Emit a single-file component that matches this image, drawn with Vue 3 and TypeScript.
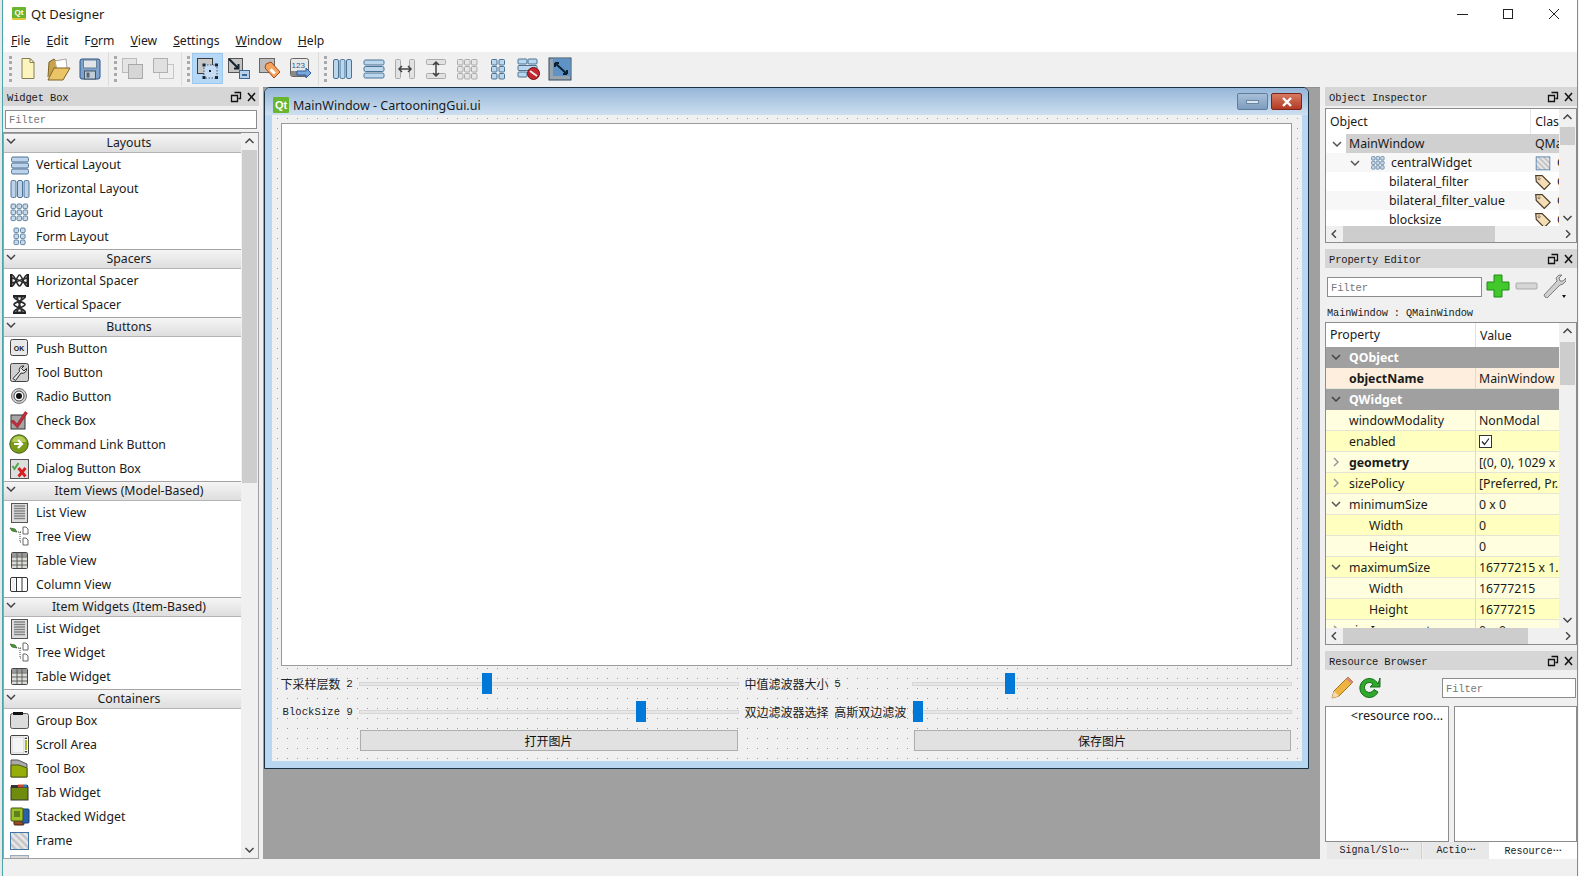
<script setup lang="ts">
const bar3h = (c: string, s: string) => [3, 9, 15].map(y => `<rect x="2.5" y="${y}" width="17" height="5" rx="1.5" fill="${c}" stroke="${s}"/>`).join('')
const bar3v = (c: string, s: string) => [2, 8.5, 15].map(x => `<rect x="${x}" y="2.5" width="5" height="17" rx="1.5" fill="${c}" stroke="${s}"/>`).join('')
const cells = (xs: number[], ys: number[], z: number, c: string, s: string) => xs.flatMap(x => ys.map(y => `<rect x="${x}" y="${y}" width="${z}" height="${z}" rx="1.2" fill="${c}" stroke="${s}" stroke-width=".9"/>`)).join('')
const listLines = [4, 6.5, 9, 11.5, 14, 16.5].map(y => `<path d="M5 ${y}h11" stroke="#808080" stroke-width="1.4"/>`).join('')
const treeIc = '<path d="M1 2l5 1 2 3-5-1z" fill="#4d9a3a" stroke="#2d5a20" stroke-width=".7"/><path d="M9 6h4M11 6v10h2" stroke="#444" stroke-dasharray="1 1" fill="none"/><path d="M14 1h3l2 2v5h-5zM14 12h3l2 2v5h-5z" fill="#fff" stroke="#555" stroke-width=".9"/>'
const tableIc = '<rect x="2.5" y="2.5" width="16" height="16" rx="1" fill="#dcdcd8" stroke="#444"/><rect x="3" y="3" width="15" height="3.5" fill="#999"/><path d="M3 7h15M3 11h15M3 15h15M8 3v15M13 3v15" stroke="#555" stroke-width=".9"/>'
const tag = '<path d="M.7 1.500h6l7.500 7.500-5.500 5.500-7.500-7.500z" fill="#f4dcb4" stroke="#4a3a28" stroke-width="1.100"/><circle cx="3.800" cy="4.500" r="1" fill="#fff" stroke="#4a3a28" stroke-width=".6"/>'
const dock = '<path d="M4.500 1.500h6v6h-2M1.500 4.500h6v6h-6z" fill="none" stroke="#111" stroke-width="1.300"/><path d="M18 2l7 8M25 2l-7 8" stroke="#111" stroke-width="1.500"/>'

const icons: Record<string, string> = {
  vl: bar3h('#bcd3ea', '#4f7596'),
  hl: bar3v('#bcd3ea', '#4f7596'),
  grid: cells([2, 8, 14], [2, 8, 14], 4.6, '#c8d9ea', '#4f7596'),
  form: cells([5, 11.5], [2, 8, 14], 4.6, '#c8d9ea', '#4f7596'),
  hsp: '<path d="M1 4h2.500v13H1zM17.500 4H20v13h-2.500z" fill="#222"/><path d="M3 5c3 0 5 11 7.500 11s4.500-11 7.500-11M3 16c3 0 5-11 7.500-11s4.500 11 7.500 11M3 8l15 5M3 13l15-5" fill="none" stroke="#2c2c2c" stroke-width="1.700"/>',
  vsp: '<path d="M4 1h13v2.500H4zM4 17.500h13V20H4z" fill="#222"/><path d="M5 3c0 3 11 5 11 7.500s-11 4.500-11 7.500M16 3c0 3-11 5-11 7.500s11 4.500 11 7.500M8 3l5 15M13 3l-5 15" fill="none" stroke="#2c2c2c" stroke-width="1.700"/>',
  push: '<rect x="1.5" y="1.500" width="17" height="16" rx="2" fill="#e9e9e9" stroke="#444"/><text x="10" y="12.500" font-size="7" font-weight="700" font-family="Liberation Sans" text-anchor="middle" fill="#222">OK</text>',
  tool: '<rect x="1.5" y="1.500" width="18" height="18" rx="2" fill="#cfcfcf" stroke="#444"/><path d="M4 16.500l6.500-7a4 4 0 0 1 4.500-5.500l-2.500 2.500 2.500 2.500 2.500-2.500a4 4 0 0 1-5.500 4.500l-5.500 7.500z" fill="#e8e8e8" stroke="#2c2c2c"/>',
  radio: '<circle cx="10" cy="10" r="7.500" fill="#d0d0d0" stroke="#777"/><circle cx="10" cy="10" r="5" fill="#fff" stroke="#444"/><circle cx="10" cy="10" r="3" fill="#111"/>',
  check: '<rect x="2" y="5" width="14" height="14" fill="#a6a6a6" stroke="#333"/><path d="M4.500 10l3.500 4 8-12.500 2.500 1.500-10 15-6.500-6.500z" fill="#c62b3a" stroke="#7a1420" stroke-width=".5"/>',
  cmd: '<circle cx="10" cy="10" r="9.200" fill="#7a9a1a" stroke="#47600f"/><path d="M3 8a7 6 0 0 1 14 0z" fill="#b5cc5a"/><path d="M5 10h7M9 6l4 4-4 4" fill="none" stroke="#fff" stroke-width="2.200"/>',
  dlg: '<rect x="1.500" y="1.500" width="18" height="19" fill="#dedede" stroke="#555"/><path d="M3.500 8l2 3 4-6" fill="none" stroke="#4da84a" stroke-width="2"/><path d="M9.500 10l7 8.500M16.500 10l-7 8.500" stroke="#d6201f" stroke-width="2.800"/>',
  list: `<rect x="2.500" y="1.500" width="16" height="19" fill="#dcdcdc" stroke="#555"/>${listLines}`,
  tree: treeIc,
  table: tableIc,
  column: '<rect x="1.500" y="3.500" width="17" height="14" rx="1.500" fill="#fff" stroke="#333"/><path d="M7.500 4v13M13 4v13" stroke="#333"/><rect x="3" y="5" width="3" height="11" fill="#eee"/>',
  group: '<rect x="1.500" y="3.500" width="18" height="15" rx="2" fill="#dcdcdc" stroke="#555"/><rect x="4" y="2" width="10" height="3" fill="#111"/>',
  scroll: '<rect x="1.500" y="1.500" width="18" height="19" rx="1.500" fill="#fff" stroke="#444"/><rect x="3" y="3" width="12" height="16" fill="#f4f4f4" stroke="#aaa" stroke-width=".5"/><rect x="16" y="6" width="2" height="10" fill="#a8b820"/><path d="M17 3l1.500 2h-3zM17 19l1.500-2h-3z" fill="#333"/>',
  toolbox: '<path d="M2 2h7l9 4v13H2z" fill="#aaa" stroke="#555"/><path d="M2 7h8l8 3v9H2z" fill="#96ad0a" stroke="#4c5a10"/>',
  tab: '<rect x="2" y="5" width="17" height="13" fill="#6f8c0f" stroke="#333"/><rect x="2" y="3" width="17" height="3" fill="#333"/><rect x="9" y="2.500" width="5" height="3" fill="#c94a2a"/><rect x="14" y="2.500" width="4" height="3" fill="#3a78b0"/>',
  stacked: '<rect x="5" y="6" width="10" height="13" rx="1" fill="#9a4a20" stroke="#4a2010"/><rect x="13" y="3" width="7" height="14" rx="1" fill="#2a62a8" stroke="#123a70"/><rect x="2" y="2" width="12" height="13" rx="1" fill="#9cc028" stroke="#3e5410"/><path d="M5 6h6M5 8h6M5 10h6" stroke="#244010"/>',
  frame: '<defs><pattern id="st" width="5" height="5" patternUnits="userSpaceOnUse" patternTransform="rotate(-45)"><rect width="5" height="5" fill="#e8e8e8"/><rect width="2.500" height="5" fill="#c4c4c4"/></pattern></defs><rect x="1.500" y="2.500" width="18" height="17" fill="url(#st)" stroke="#3f74a8"/>',
  frame2: '<rect x="1.500" y="1.500" width="18" height="19" fill="#d8d8d8" stroke="#9ab"/>',
  tag: `<svg viewBox="0 0 15 15" x="0" y="0" width="21" height="21">${tag}</svg>`,
  tnew: '<path d="M7 2.500h8l4 4v16H7z" fill="#fdf4bd" stroke="#857f57"/><path d="M15 2.500l4 4h-4z" fill="#fffde8" stroke="#857f57"/>',
  topen: '<path d="M2 21l1-15 5-3 2 2 10-1-1 6" fill="#c9a24a" stroke="#7d6324"/><path d="M9 5l11-2 1 9-10 2z" fill="#fff" stroke="#aaa"/><path d="M2 24l6-12h16l-7 12z" fill="#ecc468" stroke="#7d6324"/>',
  tsave: '<rect x="3" y="3" width="20" height="20" rx="2" fill="#7fa2cf" stroke="#2b5688"/><rect x="6.500" y="4" width="13" height="8" fill="#e2e5e8" stroke="#6a7f98"/><rect x="7.500" y="15" width="11" height="8" fill="#c0cbd8" stroke="#456"/><rect x="9.500" y="16.500" width="3" height="5" fill="#567"/>',
  tback: '<rect x="2.500" y="2.500" width="14" height="14" fill="#e4e4e4" stroke="#bcbcbc"/><rect x="8.500" y="8.500" width="14" height="14" fill="#d6d6d6" stroke="#a8a8a8"/>',
  tfront: '<rect x="8.500" y="8.500" width="14" height="14" fill="#efefef" stroke="#c6c6c6"/><rect x="2.500" y="2.500" width="14" height="14" fill="#e0e0e0" stroke="#b0b0b0"/>',
  tedit: '<rect x="2.500" y="2.500" width="15" height="15" fill="#c8c8c8" stroke="#3a3a3a"/><rect x="9" y="9" width="13" height="13" fill="#c5dcf5" stroke="#556" stroke-dasharray="1.500 1.500"/><g fill="#14283c"><rect x="7.500" y="7.500" width="3" height="3"/><rect x="20" y="7.500" width="3" height="3"/><rect x="7.500" y="20" width="3" height="3"/><rect x="20" y="20" width="3" height="3"/><rect x="14" y="14" width="2" height="2"/></g>',
  tsig: '<rect x="2.500" y="2.500" width="14" height="14" fill="#c4c4c4" stroke="#555"/><path d="M3 3l9 9M8 12.500h4.500V8" fill="none" stroke="#16202c" stroke-width="2"/><rect x="13.500" y="14.500" width="10" height="8" fill="#b8d0ea" stroke="#3c6898"/><path d="M16 19h5" stroke="#3c6898" stroke-width="2"/>',
  tbud: '<rect x="2.500" y="2.500" width="15" height="14" fill="#bdbdbd" stroke="#666"/><path d="M9 8l5-2 9 10-6 6-9-10z" fill="#f4a45c" stroke="#a8451a"/><rect x="13" y="14" width="6" height="3" transform="rotate(45 16 15)" fill="#fff"/>',
  ttab: '<rect x="2.500" y="2.500" width="18" height="18" rx="2" fill="#e8e8e8" stroke="#666"/><rect x="3" y="15" width="17" height="5" fill="#888"/><text x="3.500" y="12" font-size="8" font-family="Liberation Sans" fill="#2a5a9a">123</text><path d="M9 15h9v-3l5 5-5 5v-3H9z" fill="#7aa8dc" stroke="#2a5a9a"/>',
  thl: [3.500, 10, 16.500].map(x => `<rect x="${x}" y="3.500" width="5" height="19" rx="1.500" fill="#bcd6ee" stroke="#4b7394"/>`).join(''),
  tvl: [4, 10.500, 17].map(y => `<rect x="3" y="${y}" width="20" height="5" rx="1.500" fill="#bcd6ee" stroke="#4b7394"/>`).join(''),
  tsh: '<rect x="3.500" y="3.500" width="5" height="19" rx="1" fill="#e2e2e2" stroke="#aaa"/><rect x="17.500" y="3.500" width="5" height="19" rx="1" fill="#e2e2e2" stroke="#aaa"/><path d="M7 13h12M10 10l-3 3 3 3M16 10l3 3-3 3" fill="none" stroke="#444" stroke-width="1.500"/>',
  tsv: '<rect x="3.500" y="3.500" width="19" height="5" rx="1" fill="#e2e2e2" stroke="#aaa"/><rect x="3.500" y="17.500" width="19" height="5" rx="1" fill="#e2e2e2" stroke="#aaa"/><path d="M13 6v14M10 9l3-3 3 3M10 17l3 3 3-3" fill="none" stroke="#444" stroke-width="1.500"/>',
  tgr: [3.500, 10.500, 17.500].flatMap(x => [3.500, 10.500, 17.500].map(y => `<rect x="${x}" y="${y}" width="5.500" height="5.500" rx="1" fill="#e6e6e6" stroke="#aaa"/>`)).join(''),
  tfm: [6.500, 14].flatMap(x => [3.500, 10.500, 17.500].map(y => `<rect x="${x}" y="${y}" width="5.500" height="5.500" rx="1" fill="#bcd6ee" stroke="#4b7394"/>`)).join(''),
  tbrk: '<rect x="2" y="3" width="9" height="5" rx="1" fill="#bcd6ee" stroke="#4b7394"/><rect x="12" y="3" width="9" height="5" rx="1" fill="#bcd6ee" stroke="#4b7394"/><rect x="2" y="9.500" width="19" height="5" rx="1" fill="#bcd6ee" stroke="#4b7394"/><rect x="2" y="16" width="9" height="5" rx="1" fill="#bcd6ee" stroke="#4b7394"/><circle cx="17.500" cy="17.500" r="6" fill="#c6262e" stroke="#701018"/><path d="M14 15l7 5" stroke="#eee" stroke-width="2"/>',
  tadj: '<rect x="2" y="2" width="22" height="22" fill="#98a4ae" stroke="#2f4a62"/><rect x="6" y="2.500" width="17.500" height="17.500" fill="#5f93c6"/><path d="M8 7l12 11M8 7h4M8 7v4M20 18h-4M20 18v-4" fill="none" stroke="#0c2036" stroke-width="2"/>',
  plus: '<path d="M8 1h8v7h7v8h-7v7H8v-7H1V8h7z" fill="#43c82c" stroke="#1f8c18"/>',
  minus: '<rect x="2" y="9" width="21" height="6" rx="1" fill="#d6d6d6" stroke="#aaa"/>',
  wrench: '<path d="M3 23l-1-2 13-14-1-3 3-3 3 0-3 3 1 3 3 0 3-3v3l-3 3-3 1L5 24z" fill="#cfcfcf" stroke="#666" stroke-width=".8"/><path d="M20 21l4 0-2 3z" fill="#111"/>',
  pencil: '<path d="M2 23l2-7L18 2l5 5L9 21z" fill="#edb440" stroke="#a8751c"/><path d="M18 2l5 5-2 2-5-5z" fill="#d88a7a"/><path d="M2 23l2-7 5 5z" fill="#f4dcb0"/>',
  refresh: '<path d="M21 9A9.500 9.500 0 1 0 21 17l-4-2.500A5 5 0 1 1 16 9l-3 3h10V3z" fill="#2fa82c" stroke="#176c18"/>',
}

const tbGroups = [
  ['tnew', 'topen', 'tsave'],
  ['tback', 'tfront'],
  ['tedit', 'tsig', 'tbud', 'ttab'],
  ['thl', 'tvl', 'tsh', 'tsv', 'tgr', 'tfm', 'tbrk', 'tadj'],
]

const boxes = [
  { t: 'Layouts', r: [['Vertical Layout', 'vl'], ['Horizontal Layout', 'hl'], ['Grid Layout', 'grid'], ['Form Layout', 'form']] },
  { t: 'Spacers', r: [['Horizontal Spacer', 'hsp'], ['Vertical Spacer', 'vsp']] },
  { t: 'Buttons', r: [['Push Button', 'push'], ['Tool Button', 'tool'], ['Radio Button', 'radio'], ['Check Box', 'check'], ['Command Link Button', 'cmd'], ['Dialog Button Box', 'dlg']] },
  { t: 'Item Views (Model-Based)', r: [['List View', 'list'], ['Tree View', 'tree'], ['Table View', 'table'], ['Column View', 'column']] },
  { t: 'Item Widgets (Item-Based)', r: [['List Widget', 'list'], ['Tree Widget', 'tree'], ['Table Widget', 'table']] },
  { t: 'Containers', r: [['Group Box', 'group'], ['Scroll Area', 'scroll'], ['Tool Box', 'toolbox'], ['Tab Widget', 'tab'], ['Stacked Widget', 'stacked'], ['Frame', 'frame'], ['', 'frame2']] },
]

const sliders = [123, 93, 277, 1]

const objs = [
  { n: 'MainWindow', c: 'QMainWindow', gut: 20, chev: true, sel: true },
  { n: 'centralWidget', c: 'QWidget', gut: 38, chev: true, ic: 'grid', ci: 'frame', alt: true },
  { n: 'bilateral_filter', c: 'QLabel', gut: 63, ci: 'tag' },
  { n: 'bilateral_filter_value', c: 'QLabel', gut: 63, ci: 'tag', alt: true },
  { n: 'blocksize', c: 'QLabel', gut: 63, ci: 'tag' },
]

type P = { n: string; v?: string; g?: boolean; b?: boolean; a?: string; l?: number; cls?: string; chk?: boolean }
const props: P[] = [
  { n: 'QObject', g: true, a: 'd' },
  { n: 'objectName', v: 'MainWindow', b: true, cls: 'peach' },
  { n: 'QWidget', g: true, a: 'd' },
  { n: 'windowModality', v: 'NonModal', cls: 'y1' },
  { n: 'enabled', chk: true, cls: 'y2' },
  { n: 'geometry', v: '[(0, 0), 1029 x 678]', b: true, a: 'r', cls: 'y1' },
  { n: 'sizePolicy', v: '[Preferred, Pr...', a: 'r', cls: 'y2' },
  { n: 'minimumSize', v: '0 x 0', a: 'd', cls: 'y1' },
  { n: 'Width', v: '0', l: 1, cls: 'y2' },
  { n: 'Height', v: '0', l: 1, cls: 'y1' },
  { n: 'maximumSize', v: '16777215 x 1...', a: 'd', cls: 'y2' },
  { n: 'Width', v: '16777215', l: 1, cls: 'y1' },
  { n: 'Height', v: '16777215', l: 1, cls: 'y2' },
  { n: 'sizeIncrement', v: '0 x 0', a: 'r', cls: 'y1' },
]
</script>

<template>
  <div class="app">
    <div class="win">
      <header class="titlebar">
        <span class="qt small">Qt</span>
        <span class="apptitle">Qt Designer</span>
        <div class="wctl">
          <svg viewBox="0 0 46 20"><path d="M18 10.500h11" stroke="#222" /></svg>
          <svg viewBox="0 0 46 20"><rect x="18.500" y="5.500" width="9" height="9" fill="none" stroke="#222" /></svg>
          <svg viewBox="0 0 46 20"><path d="M18 5l10 10M28 5L18 15" stroke="#222" /></svg>
        </div>
      </header>
      <nav class="menubar">
        <span><u>F</u>ile</span><span><u>E</u>dit</span><span>F<u>o</u>rm</span><span><u>V</u>iew</span><span><u>S</u>ettings</span><span><u>W</u>indow</span><span><u>H</u>elp</span>
      </nav>
      <div class="toolbar">
        <div v-for="(g, gi) in tbGroups" :key="gi" class="tbgroup">
          <i class="handle"></i>
          <button v-for="ic in g" :key="ic" class="tbtn" :class="{ on: ic === 'tedit' }">
            <svg viewBox="0 0 26 26" class="tbic" v-html="icons[ic]"></svg>
          </button>
        </div>
      </div>

      <main class="workspace">
        <aside class="leftdock">
          <div class="docktitle">
            <span>Widget Box</span>
            <svg class="dockbtns" viewBox="0 0 28 12" v-html="dock"></svg>
          </div>
          <div class="filter lf">Filter</div>
          <div class="toolbox">
            <div class="tbcol">
              <template v-for="b in boxes" :key="b.t">
                <div class="cat">
                  <svg class="chev catchev" viewBox="0 0 10 6"><path d="M1 1l4 4 4-4" fill="none" stroke="#444" stroke-width="1.500" /></svg>
                  {{ b.t }}
                </div>
                <div v-for="r in b.r" :key="r[0] + r[1]" class="wrow">
                  <svg class="wic" viewBox="0 0 21 21" v-html="icons[r[1]]"></svg>
                  <span>{{ r[0] }}</span>
                </div>
              </template>
            </div>
            <div class="vbar lbar">
              <svg class="arr" viewBox="0 0 17 17"><path d="M4.500 10l4-4 4 4" fill="none" stroke="#444" stroke-width="1.500" /></svg>
              <div class="track"><div class="thumb"></div></div>
              <svg class="arr" viewBox="0 0 17 17"><path d="M4.500 7l4 4 4-4" fill="none" stroke="#444" stroke-width="1.500" /></svg>
            </div>
          </div>
        </aside>

        <section class="mdi">
          <div class="subwin">
            <div class="subtitle">
              <span class="qt big">Qt</span>
              <span class="subtext">MainWindow - CartooningGui.ui</span>
              <div class="subbtns">
                <button class="sb min"><i></i></button>
                <button class="sb close">
                  <svg viewBox="0 0 14 10"><path d="M3 1l8 8M11 1L3 9" stroke="#fff" stroke-width="2.400" /></svg>
                </button>
              </div>
            </div>
            <div class="form">
              <div class="textarea"></div>
              <div class="flabel">下采样层数 <span>2</span></div>
              <div class="slider"><i class="groove"></i><b class="knob" :style="{ left: sliders[0] + 'px' }"></b></div>
              <div class="flabel pl">中值滤波器大小 <span>5</span></div>
              <div class="slider"><i class="groove"></i><b class="knob" :style="{ left: sliders[1] + 'px' }"></b></div>
              <div class="flabel mono">BlockSize 9</div>
              <div class="slider"><i class="groove"></i><b class="knob" :style="{ left: sliders[2] + 'px' }"></b></div>
              <div class="flabel pl">双边滤波器选择 <em class="cjk">高斯双边滤波</em></div>
              <div class="slider"><i class="groove"></i><b class="knob" :style="{ left: sliders[3] + 'px' }"></b></div>
              <div></div>
              <button class="fbtn b1">打开图片</button>
              <div></div>
              <button class="fbtn b2">保存图片</button>
            </div>
          </div>
        </section>

        <aside class="rightdock">
          <div class="docktitle rd">
            <span>Object Inspector</span>
            <svg class="dockbtns" viewBox="0 0 28 12" v-html="dock"></svg>
          </div>
          <div class="tree">
            <div class="treeup">
              <div class="treeview">
                <div class="thead"><span class="th1">Object</span><span class="th2">Clas</span></div>
                <div v-for="o in objs" :key="o.n" class="orow" :class="{ sel: o.sel, alt: o.alt }">
                  <div class="gut" :style="{ width: o.gut + 'px' }">
                    <svg v-if="o.chev" class="chev ochev" viewBox="0 0 10 6"><path d="M1 1l4 4 4-4" fill="none" stroke="#555" stroke-width="1.500" /></svg>
                  </div>
                  <svg v-if="o.ic" class="oic" viewBox="0 0 21 21" v-html="icons[o.ic]"></svg>
                  <span class="oname">{{ o.n }}</span>
                  <div class="ocls">
                    <svg v-if="o.ci" class="oic2" viewBox="0 0 21 21" v-html="icons[o.ci]"></svg>
                    <span>{{ o.c }}</span>
                  </div>
                </div>
              </div>
              <div class="vbar obar">
                <svg class="arr" viewBox="0 0 17 17"><path d="M4.500 10l4-4 4 4" fill="none" stroke="#444" stroke-width="1.500" /></svg>
                <div class="track"><div class="thumb"></div></div>
                <svg class="arr" viewBox="0 0 17 17"><path d="M4.500 7l4 4 4-4" fill="none" stroke="#444" stroke-width="1.500" /></svg>
              </div>
            </div>
            <div class="hbar ohbar">
              <svg class="arr" viewBox="0 0 17 17"><path d="M10 4.500l-4 4 4 4" fill="none" stroke="#444" stroke-width="1.500" /></svg>
              <div class="track"><div class="thumb"></div></div>
              <svg class="arr" viewBox="0 0 17 17"><path d="M7 4.500l4 4-4 4" fill="none" stroke="#444" stroke-width="1.500" /></svg>
            </div>
          </div>

          <div class="docktitle rd pe">
            <span>Property Editor</span>
            <svg class="dockbtns" viewBox="0 0 28 12" v-html="dock"></svg>
          </div>
          <div class="petools">
            <div class="filter pf">Filter</div>
            <svg class="pic" viewBox="0 0 24 24" v-html="icons.plus"></svg>
            <svg class="pic" viewBox="0 0 24 24" v-html="icons.minus"></svg>
            <svg class="pic" viewBox="0 0 24 24" v-html="icons.wrench"></svg>
          </div>
          <div class="pelabel">MainWindow : QMainWindow</div>
          <div class="ptable">
            <div class="treeup">
              <div class="pview">
                <div class="phead"><span class="pc1">Property</span><span class="pc2">Value</span></div>
                <div v-for="(p, i) in props" :key="i" class="prow" :class="[p.cls, { grp: p.g, bold: p.b }]">
                  <div class="pn" :class="{ lvl: p.l }">
                    <svg v-if="p.a === 'd'" class="chev pchev" viewBox="0 0 10 6"><path d="M1 1l4 4 4-4" fill="none" :stroke="p.g ? '#444' : '#555'" stroke-width="1.500" /></svg>
                    <svg v-if="p.a === 'r'" class="chevr pchev" viewBox="0 0 6 10"><path d="M1 1l4 4-4 4" fill="none" stroke="#999" stroke-width="1.500" /></svg>
                    {{ p.n }}
                  </div>
                  <div class="pv">
                    <svg v-if="p.chk" class="cbx" viewBox="0 0 13 13"><rect x=".5" y=".5" width="12" height="12" fill="#fff" stroke="#333" /><path d="M3 6.500l2.500 3L10 3.500" fill="none" stroke="#222" stroke-width="1.200" /></svg>
                    <span>{{ p.v }}</span>
                  </div>
                </div>
              </div>
              <div class="vbar pbar">
                <svg class="arr" viewBox="0 0 17 17"><path d="M4.500 10l4-4 4 4" fill="none" stroke="#444" stroke-width="1.500" /></svg>
                <div class="track"><div class="thumb"></div></div>
                <svg class="arr" viewBox="0 0 17 17"><path d="M4.500 7l4 4 4-4" fill="none" stroke="#444" stroke-width="1.500" /></svg>
              </div>
            </div>
            <div class="hbar phbar">
              <svg class="arr" viewBox="0 0 17 17"><path d="M10 4.500l-4 4 4 4" fill="none" stroke="#444" stroke-width="1.500" /></svg>
              <div class="track"><div class="thumb"></div></div>
              <svg class="arr" viewBox="0 0 17 17"><path d="M7 4.500l4 4-4 4" fill="none" stroke="#444" stroke-width="1.500" /></svg>
            </div>
          </div>

          <div class="docktitle rd rb">
            <span>Resource Browser</span>
            <svg class="dockbtns" viewBox="0 0 28 12" v-html="dock"></svg>
          </div>
          <div class="rbtools">
            <svg class="pic" viewBox="0 0 24 24" v-html="icons.pencil"></svg>
            <svg class="pic" viewBox="0 0 24 24" v-html="icons.refresh"></svg>
            <div class="filter rf">Filter</div>
          </div>
          <div class="panes">
            <div class="pane p1">&lt;resource roo...</div>
            <div class="pane p2"></div>
          </div>
          <div class="tabs">
            <div class="tabx t1"><span>Signal/Slo<small>•••</small></span></div>
            <div class="tabx t2"><span>Actio<small>•••</small></span></div>
            <div class="tabx t3"><span>Resource<small>•••</small></span></div>
          </div>
        </aside>
      </main>
      <footer class="status"></footer>
    </div>
  </div>
</template>

<style>
html, body { margin: 0; padding: 0; overflow: hidden; background: #f0f0f0; }
</style>

<style scoped>
.app {
  width: 1579px; height: 876px; box-sizing: border-box;
  border-left: 2px solid #e8e8e8; border-right: 1px solid #f4f4f4;
  font-family: "Noto Sans", "Noto Sans CJK SC", sans-serif; font-size: 12.3px; color: #1a1a1a;
  overflow: hidden;
}
.win {
  height: 100%; display: flex; flex-direction: column; background: #f0f0f0;
  border-left: 1px solid #4aa5aa; border-right: 1px solid #4aa5aa;
}
.titlebar { height: 27px; flex: none; background: #fff; display: flex; align-items: center; padding-left: 9px; }
.qt {
  display: flex; align-items: center; justify-content: center; background: #68b52e; color: #fff;
  font-family: "Liberation Sans", sans-serif; font-weight: 700; border-radius: 1px;
}
.qt.small { width: 14px; height: 13px; font-size: 8px; border-bottom: 2px solid #e3c53a; box-sizing: border-box; }
.qt.big { width: 16px; height: 16px; font-size: 11px; margin-top: 7px; }
.apptitle { margin-left: 5px; font-size: 13px; }
.wctl { margin-left: auto; display: flex; }
.wctl svg { width: 46px; height: 20px; }
.menubar { height: 25px; box-sizing: border-box; padding: 2px 0 0 8px; flex: none; background: #fff; display: flex; align-items: center; font-size: 12.2px; }
.menubar span { margin-right: 16px; }
.toolbar { height: 35px; flex: none; display: flex; align-items: center; background: #f0f0f0; padding-bottom: 2px; box-sizing: border-box; }
.tbgroup { height: 34px; display: flex; align-items: center; padding-left: 5px; padding-right: 2px; border-right: 1px solid #dcdcdc; }
.tbgroup:first-child { padding-left: 6px; padding-right: 3px; }
.tbgroup:last-child { border-right: 0; }
.tbgroup:nth-child(3) .handle { margin-right: 2px; }
.handle { width: 0; height: 26px; border-left: 3px dotted #a9a9a9; flex: none; }
.tbtn { width: 31px; height: 31px; padding: 0; border: 1px solid transparent; background: none; display: flex; align-items: center; justify-content: center; flex: none; box-sizing: border-box; }
.tbtn.on { background: #b5d8f6; border-color: #9cc8ee; }
.tbic { width: 26px; height: 26px; }

.workspace { height: 772px; flex: none; display: flex; }
.leftdock { width: 260px; flex: none; display: flex; flex-direction: column; }
.docktitle {
  height: 19px; width: 256px; box-sizing: border-box; flex: none; background: #d6d6d6; display: flex; align-items: center; justify-content: space-between;
  padding: 2px 1px 0 4px; font-family: "Liberation Mono", monospace; font-size: 10.5px; letter-spacing: -.15px;
}
.docktitle.rd { width: 252px; padding-right: 2px; }
.dockbtns { width: 28px; height: 12px; margin-top: -2px; }
.filter { box-sizing: border-box; background: #fff; border: 1px solid #8c8c8c; color: #777; font-family: "Liberation Mono", monospace; font-size: 10.5px; letter-spacing: -.15px; display: flex; align-items: center; padding: 1px 0 0 3px; }
.lf { height: 19px; margin: 4px 0 3px 2px; width: 252px; }
.toolbox { flex: 1; width: 256px; min-height: 0; box-sizing: border-box; border: 1px solid #a0a0a0; border-top-color: #8c8c8c; display: flex; overflow: hidden; background: #fff; }
.tbcol { width: 237px; flex: none; overflow: hidden; }
.cat {
  height: 20px; box-sizing: border-box; position: relative; display: flex; align-items: center; justify-content: center;
  padding: 0 0 2px 13px;
  background: linear-gradient(#f5f5f5, #dedede); border-top: 1px solid #a4a4a4; border-bottom: 1px solid #b4b4b4; font-size: 12.3px;
}
.catchev { position: absolute; left: 2px; top: 4px; }
.chev { width: 10px; height: 6px; }
.chevr { width: 6px; height: 10px; }
.wrow { height: 24px; box-sizing: border-box; display: flex; align-items: center; padding: 0 0 2px 5px; font-size: 12.3px; }
.wic { width: 21px; height: 21px; flex: none; margin-right: 6px; }
.vbar { width: 17px; flex: none; display: flex; flex-direction: column; background: #f0f0f0; }
.hbar { height: 16px; flex: none; display: flex; background: #f0f0f0; }
.arr { width: 17px; height: 17px; flex: none; }
.hbar .arr { height: 16px; }
.track { flex: 1; min-height: 0; min-width: 0; }
.thumb { background: #cdcdcd; }
.lbar .thumb { height: 333px; width: 15px; margin: 0 1px; }
.mdi { width: 1057px; flex: none; background: #a0a0a0; box-sizing: border-box; padding-left: 1px; border-top: 1px solid #909090; }
.subwin {
  width: 1045px; height: 682px; margin-top: -1px; box-sizing: border-box; border: 1px solid #1a3244; border-radius: 6px 6px 0 0;
  background: #bad7f1; display: flex; flex-direction: column; align-items: center;
}
.subtitle {
  height: 27px; width: 100%; flex: none; display: flex; align-items: center; padding: 0 6px 0 8px; box-sizing: border-box;
  background: linear-gradient(#96b6d8, #cddff0); border-radius: 5px 5px 0 0;
}
.subtext { margin: 8px 0 0 4px; font-size: 12.5px; }
.subbtns { margin-left: auto; display: flex; gap: 3px; }
.sb { width: 31px; height: 17px; padding: 0; box-sizing: border-box; border-radius: 2px; display: flex; align-items: center; justify-content: center; }
.sb.min { background: linear-gradient(#a8bfd8, #7d9cbd); border: 1px solid #5f7d9c; }
.sb.min i { width: 13px; height: 4px; background: #dde6ef; border: 1px solid #6a86a2; box-sizing: border-box; }
.sb.close { background: linear-gradient(#d77a62, #b33a24); border: 1px solid #7c241a; }
.sb.close svg { width: 14px; height: 10px; }
.form {
  width: 1030px; height: 646px; box-sizing: border-box; padding: 8px 0 0 9px;
  background-color: #f0f0f0;
  background-image: radial-gradient(circle at .5px .5px, #9a9a9a .6px, transparent .8px);
  background-size: 10px 10px; background-position: 5px 3px;
  display: grid; grid-template-columns: 78px 380px 173px 380px; grid-template-rows: 543px 21px 21px 22px; row-gap: 7px; align-content: start;
}
.textarea { grid-column: 1 / 5; background: #fff; border: 1px solid #9a9a9a; box-sizing: border-box; }
.flabel { display: flex; align-items: center; font-size: 12px; white-space: pre; font-family: "Noto Sans CJK SC", sans-serif; color: #222; }
.flabel span { font-family: "Liberation Mono", monospace; font-size: 11px; margin-left: 3px; }
.flabel .cjk { font-style: normal; margin-left: 3px; }
.flabel.pl { padding-left: 6px; }
.flabel.mono { font-family: "Liberation Mono", monospace; font-size: 10.5px; padding: 1px 0 0 2px; letter-spacing: .1px; }
.slider { position: relative; display: flex; align-items: center; }
.groove { width: 100%; height: 4px; box-sizing: border-box; background: #e6e6e6; border: 1px solid #d6d6d6; }
.knob { position: absolute; top: 0; width: 10px; height: 21px; background: #0078d7; }
.fbtn { height: 21px; align-self: end; background: #e1e1e1; border: 1px solid #adadad; padding: 0; font: 12px "Noto Sans CJK SC", sans-serif; color: #111; }
.fbtn.b1 { margin: 0 1px; }
.fbtn.b2 { margin: 0 1px 0 2px; }

.rightdock { width: 252px; margin-left: 5px; flex: none; display: flex; flex-direction: column; }
.tree { height: 135px; flex: none; margin-top: 2px; box-sizing: border-box; border: 1px solid #8c8c8c; display: flex; flex-direction: column; background: #fff; }
.treeup { flex: 1; min-height: 0; display: flex; }
.treeview { flex: 1; min-width: 0; overflow: hidden; }
.thead { height: 25px; display: flex; align-items: center; position: relative; }
.th1 { margin-left: 4px; width: 205px; }
.th2 { border-left: 1px solid #e6e6e6; padding-left: 4px; height: 25px; line-height: 25px; }
.orow { height: 19px; display: flex; align-items: center; position: relative; }
.orow.alt { background: #f7f7f7; }
.orow.sel { background: #d0d0d0; }
.gut { height: 19px; flex: none; display: flex; align-items: center; justify-content: flex-end; box-sizing: border-box; padding-right: 4px; }
.sel .gut { background: #fff; }
.oic { width: 16px; height: 16px; margin: 0 5px 0 6px; flex: none; }
.oname { white-space: nowrap; padding-bottom: 1px; }
.sel .oname { margin-left: 3px; }
.ocls { position: absolute; left: 209px; right: 0; top: 0; height: 19px; display: flex; align-items: center; overflow: hidden; white-space: nowrap; }
.oic2 { width: 16px; height: 16px; flex: none; margin-right: 6px; }
.obar .thumb { height: 18px; margin-top: 1px; width: 15px; margin-left: 1px; }
.ohbar .thumb { height: 16px; width: 152px; }
.pe { margin-top: 6px; }
.petools { height: 36px; flex: none; display: flex; align-items: center; padding-left: 2px; }
.pf { width: 155px; height: 20px; margin-top: 2px; }
.pic { width: 24px; height: 24px; flex: none; }
.petools .pic { margin-left: 4px; }
.pelabel { height: 18px; flex: none; font-family: "Liberation Mono", monospace; font-size: 10.3px; letter-spacing: -.1px; display: flex; align-items: center; padding: 0 0 1px 2px; box-sizing: border-box; }
.ptable { height: 323px; flex: none; box-sizing: border-box; border: 1px solid #8c8c8c; display: flex; flex-direction: column; background: #fff; }
.pview { flex: 1; min-width: 0; overflow: hidden; }
.phead { height: 24px; display: flex; align-items: center; }
.pc1 { width: 150px; box-sizing: border-box; padding-left: 4px; height: 24px; line-height: 24px; border-right: 1px solid #e0e0e0; }
.pc2 { padding-left: 4px; }
.prow { height: 21px; display: flex; box-sizing: border-box; border-bottom: 1px solid #e5e5d5; line-height: 20px; }
.prow.grp { background: #a0a0a0; color: #fff; font-weight: 700; border-bottom-color: #a0a0a0; }
.prow.peach { background: #fdeedd; }
.prow.y1 { background: #ffffe0; }
.prow.y2 { background: #ffffc0; }
.prow.bold .pn { font-weight: 700; }
.pn { width: 150px; flex: none; box-sizing: border-box; padding: 1px 0 0 23px; position: relative; border-right: 1px solid #dcdccc; white-space: nowrap; }
.grp .pn { border-right: 0; }
.pn.lvl { padding-left: 43px; }
.pchev { position: absolute; left: 5px; top: 7px; }
.chevr.pchev { left: 7px; top: 5px; }
.pv { flex: 1; min-width: 0; overflow: hidden; white-space: nowrap; padding: 1px 0 0 3px; display: flex; align-items: center; }
.cbx { width: 13px; height: 13px; }
.pbar .thumb { height: 43px; width: 15px; margin-left: 1px; margin-top: 2px; }
.phbar .thumb { height: 16px; width: 185px; }
.rb { margin-top: 6px; }
.rbtools { height: 36px; flex: none; display: flex; align-items: center; padding: 0 0 2px 5px; box-sizing: border-box; }
.rbtools .pic + .pic { margin-left: 3px; }
.rf { width: 134px; height: 20px; margin: 2px 1px 0 auto; }
.panes { height: 136px; flex: none; display: flex; gap: 5px; }
.pane { box-sizing: border-box; background: #fff; border: 1px solid #8c8c8c; }
.p1 { width: 124px; text-align: center; padding: 0 0 0 20px; white-space: nowrap; font-size: 12.6px; }
.p2 { flex: 1; }
.tabs { height: 19px; flex: none; display: flex; font-family: "Liberation Mono", monospace; font-size: 10px; padding-left: 2px; }
.tabx { display: flex; align-items: center; justify-content: center; box-sizing: border-box; }
.tabx small { font-size: 6px; letter-spacing: -.6px; vertical-align: 2px; }
.t1 { width: 95px; height: 17px; background: #e8e8e8; border-right: 1px solid #d0d0d0; }
.t2 { width: 66px; height: 17px; background: #e8e8e8; margin-left: 1px; }
.t3 { flex: 1; background: #fff; height: 19px; }
.status { flex: 1; background: #f0f0f0; }
</style>
